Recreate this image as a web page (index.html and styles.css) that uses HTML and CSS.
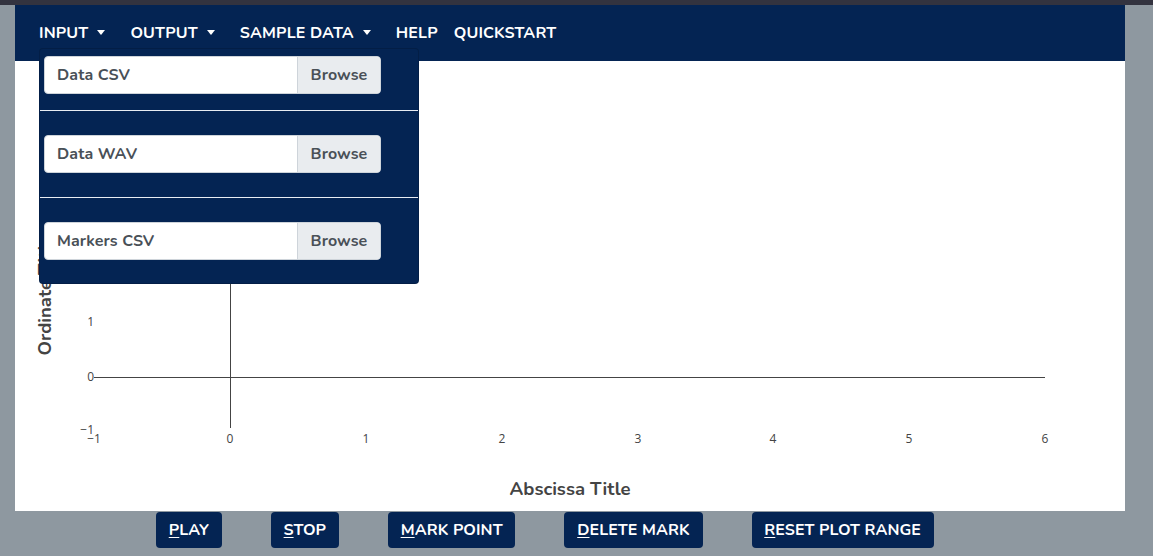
FILE: index.html
```html
<!DOCTYPE html>
<html lang="en">
<head>
<meta charset="utf-8">
<title>Plot</title>
<link rel="stylesheet" href="styles.css">
</head>
<body>
<div class="topstrip"></div>
<div class="app">
  <nav class="navbar">
    <ul class="nav">
      <li class="nav-item dropdown">
        <a class="nav-link dropdown-toggle">INPUT</a>
        <div class="dropdown-menu">
          <div class="dd-item first">
            <div class="file-input"><span class="file-label">Data CSV</span><span class="file-btn">Browse</span></div>
          </div>
          <div class="dd-divider"></div>
          <div class="dd-item">
            <div class="file-input"><span class="file-label">Data WAV</span><span class="file-btn">Browse</span></div>
          </div>
          <div class="dd-divider"></div>
          <div class="dd-item last">
            <div class="file-input"><span class="file-label">Markers CSV</span><span class="file-btn">Browse</span></div>
          </div>
        </div>
      </li>
      <li class="nav-item"><a class="nav-link dropdown-toggle">OUTPUT</a></li>
      <li class="nav-item"><a class="nav-link dropdown-toggle">SAMPLE DATA</a></li>
      <li class="nav-item"><a class="nav-link">HELP</a></li>
      <li class="nav-item"><a class="nav-link">QUICKSTART</a></li>
    </ul>
  </nav>
  <main class="plot">
    <svg class="chart" width="1110" height="450" viewBox="0 0 1110 450">
      <line class="axis" x1="79" y1="316" x2="1030" y2="316"/>
      <line class="axis" x1="215" y1="60" x2="215" y2="367"/>
      <g class="ytick">
        <text x="79" y="265">1</text>
        <text x="79" y="320">0</text>
        <text x="79" y="373">&#8722;1</text>
      </g>
      <g class="xtick">
        <text x="79" y="382">&#8722;1</text>
        <text x="215" y="382">0</text>
        <text x="351" y="382">1</text>
        <text x="487" y="382">2</text>
        <text x="623" y="382">3</text>
        <text x="758" y="382">4</text>
        <text x="894" y="382">5</text>
        <text x="1030" y="382">6</text>
      </g>
      <text class="title" x="555" y="434">Abscissa Title</text>
      <text class="title" transform="translate(36,234) rotate(-90)">Ordinate Title</text>
    </svg>
  </main>
</div>
<div class="controls">
  <button class="ctl-btn"><u>P</u>LAY</button>
  <button class="ctl-btn"><u>S</u>TOP</button>
  <button class="ctl-btn"><u>M</u>ARK POINT</button>
  <button class="ctl-btn"><u>D</u>ELETE MARK</button>
  <button class="ctl-btn"><u>R</u>ESET PLOT RANGE</button>
</div>
</body>
</html>
```
FILE: styles.css
```css
* { box-sizing: border-box; }
html, body { margin: 0; padding: 0; }
body {
  background: #8e98a0;
  font-family: "Nunito", "Open Sans", "Liberation Sans", sans-serif;
  width: 1153px;
  height: 556px;
  overflow: hidden;
}
.topstrip { height: 5px; background: #33333f; }
.app { margin-left: 15px; width: 1110px; background: #fff; }
.navbar {
  height: 56px;
  background: #042453;
  padding-left: 16px;
}
.nav {
  list-style: none;
  margin: 0;
  padding: 0;
  display: flex;
  height: 100%;
}
.nav-item {
  position: relative;
  display: flex;
  align-items: center;
  height: 100%;
}
.nav-link {
  color: #fff;
  font-weight: 700;
  font-size: 16px;
  letter-spacing: 0.15px;
  padding: 0 8px;
  display: flex;
  align-items: center;
}
.dropdown-toggle { padding-right: 17px; }
.dropdown-toggle::after {
  content: "";
  display: inline-block;
  margin-left: 9px;
  border-top: 5px solid #fff;
  border-left: 4px solid transparent;
  border-right: 4px solid transparent;
  margin-top: -2px;
}
.dropdown-menu {
  position: absolute;
  left: 8px;
  top: 43px;
  width: 380px;
  height: 236px;
  background: #042453;
  border: 1px solid rgba(0,0,0,0.15);
  border-radius: 4px;
  padding-top: 7px;
  z-index: 10;
}
.dd-item { padding: 24px 4px 24px; }
.dd-item.first { padding: 0 4px 16px; }
.dd-item.last { padding-bottom: 0; }
.dd-divider { height: 1px; background: #e8ecf2; }
.file-input {
  display: flex;
  width: 337px;
  height: 38px;
  background: #fff;
  border: 1px solid #ced4da;
  border-radius: 4px;
  overflow: hidden;
  font-size: 16px;
  font-weight: 700;
  letter-spacing: 0.1px;
  color: #495057;
}
.file-label {
  flex: 1;
  display: flex;
  align-items: center;
  padding-left: 12px;
}
.file-btn {
  width: 83px;
  display: flex;
  align-items: center;
  justify-content: center;
  background: #e9ecef;
  border-left: 1px solid #ced4da;
}
.plot { height: 450px; }
.chart { display: block; }
.axis { stroke: #444; stroke-width: 1; shape-rendering: crispEdges; }
.ytick text {
  font-family: "Open Sans", sans-serif;
  font-size: 12px;
  fill: #444;
  text-anchor: end;
}
.xtick text {
  font-family: "Open Sans", sans-serif;
  font-size: 12px;
  fill: #444;
  text-anchor: middle;
}
.title {
  font-family: "Nunito", "Open Sans", sans-serif;
  font-size: 18.5px;
  font-weight: 700;
  fill: #444;
  text-anchor: middle;
}
.controls {
  display: flex;
  gap: 49px;
  padding-left: 156px;
  margin-top: 1px;
}
.ctl-btn {
  height: 36px;
  padding: 0 12.75px;
  border: none;
  border-radius: 4px;
  background: #042453;
  color: #fff;
  font-family: "Nunito", "Open Sans", "Liberation Sans", sans-serif;
  font-weight: 700;
  font-size: 16px;
  letter-spacing: 0.1px;
}
.ctl-btn u { text-decoration-thickness: 1px; text-underline-offset: 2px; }
```
